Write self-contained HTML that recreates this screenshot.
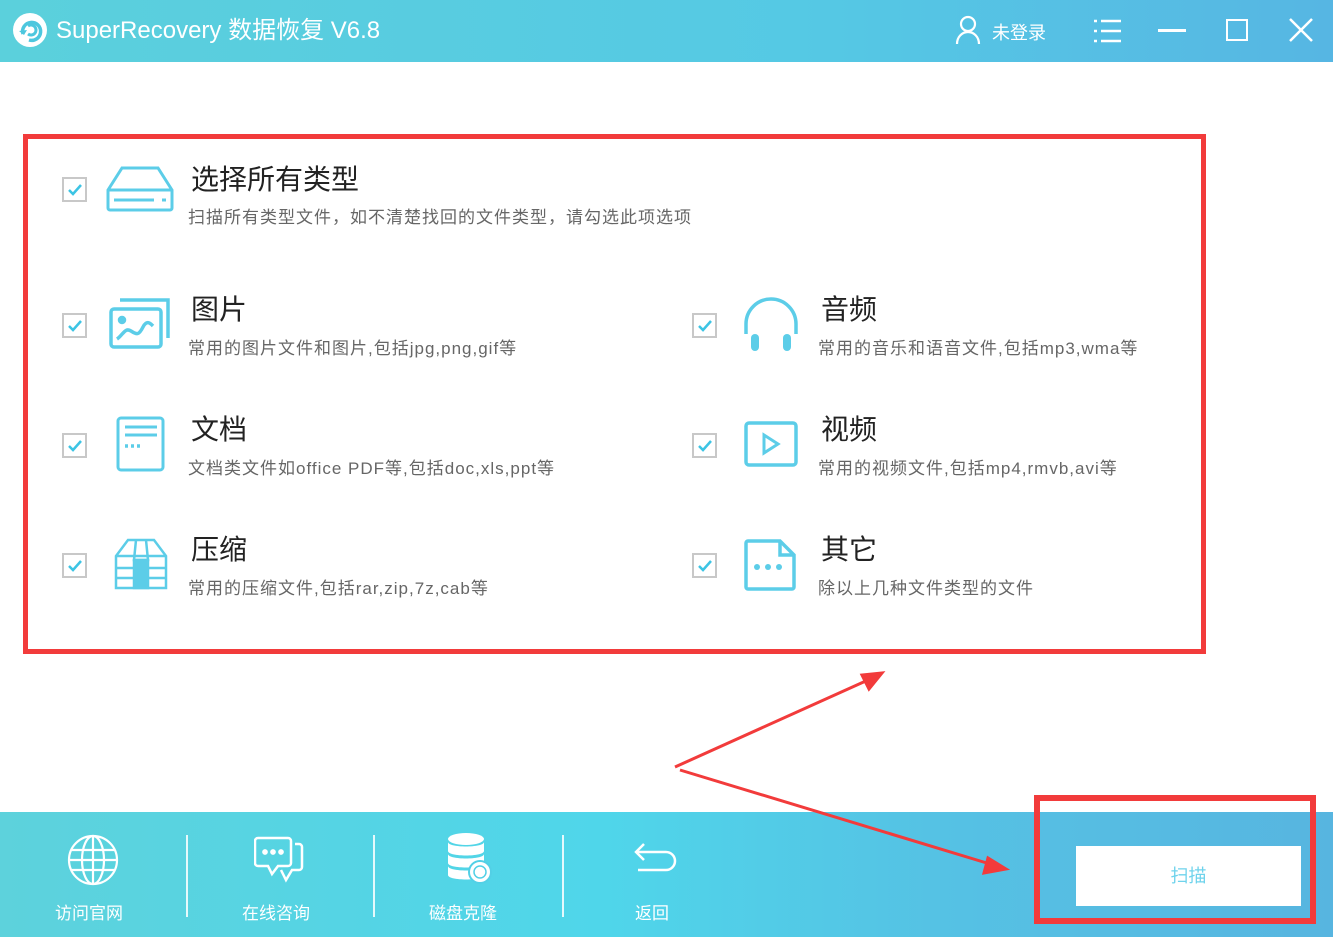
<!DOCTYPE html>
<html><head><meta charset="utf-8"><style>
*{margin:0;padding:0;box-sizing:border-box}
body{width:1333px;height:937px;position:relative;background:#fff;font-family:"Liberation Sans","Noto Sans CJK SC",sans-serif;overflow:hidden}
.top{position:absolute;left:0;top:0;width:1333px;height:62px;background:linear-gradient(90deg,#5bd0dc,#55c9e4 60%,#56b6e3)}
.bot{position:absolute;left:0;top:812px;width:1333px;height:125px;background:linear-gradient(90deg,#5dd2dc,#4fd6ea 45%,#55c2e4 70%,#57b5e0)}
.abs{position:absolute}
.cb{position:absolute;width:25px;height:25px;border:2px solid #c8c8c8;background:#fff}
.cb svg{position:absolute;left:3px;top:4px}
.t{position:absolute;font-size:28px;color:#222;line-height:1}
.d{position:absolute;font-size:17px;letter-spacing:1px;color:#666;line-height:1;white-space:nowrap}
.bl{position:absolute;color:#fff;font-size:17px;top:899px}
.sep{position:absolute;top:835px;width:2px;height:82px;background:#fff;opacity:.85}
</style></head><body>
<div class="top"></div>
<svg class="abs" style="left:12px;top:12px" width="36" height="36" viewBox="0 0 36 36"><circle cx="18" cy="18" r="17" fill="#fff"/><path d="M11 22a9 9 0 1 1 6 6" stroke="#4dc7de" stroke-width="3.5" fill="none"/><path d="M16 14a5 5 0 1 1 0 8" stroke="#4dc7de" stroke-width="3" fill="none"/><path d="M7 19l5 4 3-5z" fill="#4dc7de"/></svg>
<div class="abs" style="left:56px;top:16px;color:#fff;font-size:24px;line-height:30px">SuperRecovery 数据恢复 V6.8</div>
<svg class="abs" style="left:955px;top:15px" width="26" height="30" viewBox="0 0 26 30" fill="none" stroke="#fff" stroke-width="2.2"><circle cx="13" cy="9" r="7"/><path d="M2 29c0-7 5-12 11-12s11 5 11 12"/></svg>
<div class="abs" style="left:992px;top:19px;color:#fff;font-size:18px">未登录</div>
<svg class="abs" style="left:1093px;top:18px" width="28" height="26" viewBox="0 0 28 26" stroke="#fff" stroke-width="2.5"><path d="M1 3h3M1 13h3M1 23h3M8 3h20M8 13h20M8 23h20"/></svg>
<div class="abs" style="left:1158px;top:29px;width:28px;height:3px;background:#fff"></div>
<div class="abs" style="left:1226px;top:19px;width:22px;height:22px;border:2.5px solid #fff"></div>
<svg class="abs" style="left:1289px;top:18px" width="24" height="24" stroke="#fff" stroke-width="2.5"><path d="M1 1l22 22M23 1L1 23"/></svg>

<div class="abs" style="left:23px;top:134px;width:1183px;height:520px;border:5px solid #f23b3b"></div>

<div class="cb" style="left:62px;top:177px"><svg width="16" height="13"><path d="M2 7l4 4 8-9" stroke="#3cc4e4" stroke-width="2.5" fill="none"/></svg></div>
<svg class="abs" style="left:106px;top:166px" width="68" height="46" viewBox="0 0 68 46" fill="none" stroke="#5ccde8" stroke-width="3"><path d="M16 2h36l14 22v18a2 2 0 0 1-2 2H4a2 2 0 0 1-2-2V24z"/><path d="M2 24h64M8 34h40"/><path d="M56 34h4"/></svg>
<div class="t" style="left:191px;top:166px">选择所有类型</div>
<div class="d" style="left:188px;top:209px">扫描所有类型文件，如不清楚找回的文件类型，请勾选此项选项</div>

<div class="cb" style="left:62px;top:313px"><svg width="16" height="13"><path d="M2 7l4 4 8-9" stroke="#3cc4e4" stroke-width="2.5" fill="none"/></svg></div>
<svg class="abs" style="left:108px;top:296px" width="64" height="54" viewBox="0 0 64 54" fill="none" stroke="#5ccde8" stroke-width="3.5"><path d="M12 4h48v38"/><rect x="3" y="13" width="50" height="38" rx="3"/><circle cx="14" cy="24" r="2.5" fill="#5ccde8"/><path d="M9 43c6-4 8-12 14-8s8 4 12-4 8-3 10-1"/></svg>
<div class="t" style="left:191px;top:296px">图片</div>
<div class="d" style="left:188px;top:340px">常用的图片文件和图片,包括jpg,png,gif等</div>

<div class="cb" style="left:62px;top:433px"><svg width="16" height="13"><path d="M2 7l4 4 8-9" stroke="#3cc4e4" stroke-width="2.5" fill="none"/></svg></div>
<svg class="abs" style="left:116px;top:416px" width="50" height="56" viewBox="0 0 50 56" fill="none" stroke="#5ccde8" stroke-width="3"><rect x="2" y="2" width="45" height="52" rx="3"/><path d="M9 11h32M9 19h32"/><path d="M9 30h3M15 30h3M21 30h3" stroke-width="3.5"/></svg>
<div class="t" style="left:191px;top:416px">文档</div>
<div class="d" style="left:188px;top:460px">文档类文件如office PDF等,包括doc,xls,ppt等</div>

<div class="cb" style="left:62px;top:553px"><svg width="16" height="13"><path d="M2 7l4 4 8-9" stroke="#3cc4e4" stroke-width="2.5" fill="none"/></svg></div>
<svg class="abs" style="left:114px;top:538px" width="54" height="52" viewBox="0 0 54 52" fill="none" stroke="#5ccde8" stroke-width="2.5"><path d="M14 2h26l12 16v32H2V18z"/><path d="M2 30h50M2 40h50M2 18h50"/><path d="M22 2l-2 20h14l-2-20"/><rect x="20" y="22" width="14" height="28" fill="#5ccde8"/></svg>
<div class="t" style="left:191px;top:536px">压缩</div>
<div class="d" style="left:188px;top:580px">常用的压缩文件,包括rar,zip,7z,cab等</div>

<div class="cb" style="left:692px;top:313px"><svg width="16" height="13"><path d="M2 7l4 4 8-9" stroke="#3cc4e4" stroke-width="2.5" fill="none"/></svg></div>
<svg class="abs" style="left:742px;top:296px" width="58" height="58" viewBox="0 0 58 58" fill="none" stroke="#5ccde8" stroke-width="3.5"><path d="M4 38V28a25 25 0 0 1 50 0v10"/><rect x="9" y="38" width="8" height="17" rx="4" fill="#5ccde8" stroke="none"/><rect x="41" y="38" width="8" height="17" rx="4" fill="#5ccde8" stroke="none"/></svg>
<div class="t" style="left:821px;top:296px">音频</div>
<div class="d" style="left:818px;top:340px">常用的音乐和语音文件,包括mp3,wma等</div>

<div class="cb" style="left:692px;top:433px"><svg width="16" height="13"><path d="M2 7l4 4 8-9" stroke="#3cc4e4" stroke-width="2.5" fill="none"/></svg></div>
<svg class="abs" style="left:744px;top:421px" width="54" height="46" viewBox="0 0 54 46" fill="none" stroke="#5ccde8" stroke-width="3.5"><rect x="2" y="2" width="50" height="42" rx="3"/><path d="M20 14v18l14-9z" stroke-width="3"/></svg>
<div class="t" style="left:821px;top:416px">视频</div>
<div class="d" style="left:818px;top:460px">常用的视频文件,包括mp4,rmvb,avi等</div>

<div class="cb" style="left:692px;top:553px"><svg width="16" height="13"><path d="M2 7l4 4 8-9" stroke="#3cc4e4" stroke-width="2.5" fill="none"/></svg></div>
<svg class="abs" style="left:744px;top:539px" width="52" height="52" viewBox="0 0 52 52" fill="none" stroke="#5ccde8" stroke-width="3.5"><path d="M4 2h32l14 14v32a2 2 0 0 1-2 2H4a2 2 0 0 1-2-2V4a2 2 0 0 1 2-2z"/><path d="M36 2v14h14"/><circle cx="13" cy="28" r="3" fill="#5ccde8" stroke="none"/><circle cx="24" cy="28" r="3" fill="#5ccde8" stroke="none"/><circle cx="35" cy="28" r="3" fill="#5ccde8" stroke="none"/></svg>
<div class="t" style="left:821px;top:536px">其它</div>
<div class="d" style="left:818px;top:580px">除以上几种文件类型的文件</div>

<div class="bot"></div>
<svg class="abs" style="left:67px;top:834px" width="52" height="52" viewBox="0 0 52 52" fill="none" stroke="#fff" stroke-width="2.2"><ellipse cx="26" cy="26" rx="24" ry="24"/><ellipse cx="26" cy="26" rx="11" ry="24"/><path d="M26 2v48M4 16h44M2 26h48M4 36h44"/></svg>
<div class="bl" style="left:55px">访问官网</div>
<div class="sep" style="left:186px"></div>
<svg class="abs" style="left:254px;top:836px" width="52" height="48" viewBox="0 0 52 48" fill="none" stroke="#fff" stroke-width="2.5"><path d="M4 2h30a3 3 0 0 1 3 3v22a3 3 0 0 1-3 3H24l-6 8-4-8H4a3 3 0 0 1-3-3V5a3 3 0 0 1 3-3z"/><path d="M41 8h4a3 3 0 0 1 3 3v20a3 3 0 0 1-3 3h-7l-6 10-5-10"/><circle cx="11" cy="16" r="1.6" fill="#fff"/><circle cx="19" cy="16" r="1.6" fill="#fff"/><circle cx="27" cy="16" r="1.6" fill="#fff"/></svg>
<div class="bl" style="left:242px">在线咨询</div>
<div class="sep" style="left:373px"></div>
<svg class="abs" style="left:446px;top:832px" width="46" height="54" viewBox="0 0 46 54"><ellipse cx="20" cy="7" rx="18" ry="6" fill="#fff"/><path d="M2 10c0 6 36 6 36 0v9c0 6-36 6-36 0z" fill="#fff"/><path d="M2 22c0 6 36 6 36 0v9c0 6-36 6-36 0z" fill="#fff"/><path d="M2 34c0 6 36 6 36 0v9c0 6-36 6-36 0z" fill="#fff"/><circle cx="34" cy="40" r="11" fill="#fff" stroke="#52d0e6" stroke-width="2"/><circle cx="34" cy="40" r="6" fill="none" stroke="#52d0e6" stroke-width="1.5"/></svg>
<div class="bl" style="left:429px">磁盘克隆</div>
<div class="sep" style="left:562px"></div>
<svg class="abs" style="left:632px;top:842px" width="46" height="36" viewBox="0 0 46 36" fill="none" stroke="#fff" stroke-width="2.5"><path d="M4 10h30a9 9 0 0 1 0 18H6"/><path d="M12 2L4 10l8 8"/></svg>
<div class="bl" style="left:635px">返回</div>

<div class="abs" style="left:1034px;top:795px;width:282px;height:129px;border:6px solid #f23b3b"></div>
<div class="abs" style="left:1076px;top:846px;width:225px;height:60px;background:#fff;color:#6fd3ec;font-size:18px;text-align:center;line-height:60px">扫描</div>

<svg class="abs" style="left:0;top:0" width="1333" height="937" viewBox="0 0 1333 937"><g stroke="#f23b3b" stroke-width="3" fill="#f23b3b"><path d="M675 767L868 680" fill="none"/><path d="M882 673l-20 2 7 14z"/><path d="M680 770L990 864" fill="none"/><path d="M1006 869l-18-11-4 15z"/></g></svg>
</body></html>
